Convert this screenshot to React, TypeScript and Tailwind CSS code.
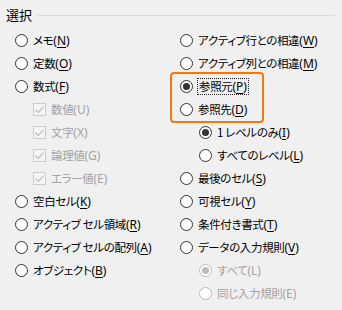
import React from 'react';

type Item = {
  label: string;
  key: string;
  kind?: 'radio' | 'check';
  checked?: boolean;
  disabled?: boolean;
  indent?: boolean;
  focus?: boolean;
};

const left: Item[] = [
  { label: 'メモ', key: 'N' },
  { label: '定数', key: 'O' },
  { label: '数式', key: 'F' },
  { label: '数値', key: 'U', kind: 'check', checked: true, disabled: true, indent: true },
  { label: '文字', key: 'X', kind: 'check', checked: true, disabled: true, indent: true },
  { label: '論理値', key: 'G', kind: 'check', checked: true, disabled: true, indent: true },
  { label: 'エラー値', key: 'E', kind: 'check', checked: true, disabled: true, indent: true },
  { label: '空白セル', key: 'K' },
  { label: 'アクティブ セル領域', key: 'R' },
  { label: 'アクティブ セルの配列', key: 'A' },
  { label: 'オブジェクト', key: 'B' },
];

const right: Item[] = [
  { label: 'アクティブ行との相違', key: 'W' },
  { label: 'アクティブ列との相違', key: 'M' },
  { label: '参照元', key: 'P', checked: true, focus: true },
  { label: '参照先', key: 'D' },
  { label: '1 レベルのみ', key: 'I', checked: true, indent: true },
  { label: 'すべてのレベル', key: 'L', indent: true },
  { label: '最後のセル', key: 'S' },
  { label: '可視セル', key: 'Y' },
  { label: '条件付き書式', key: 'T' },
  { label: 'データの入力規則', key: 'V' },
  { label: 'すべて', key: 'L', checked: true, disabled: true, indent: true },
  { label: '同じ入力規則', key: 'E', disabled: true, indent: true },
];

function Radio({ checked, disabled }: { checked?: boolean; disabled?: boolean }) {
  return (
    <span
      className={`flex h-[13px] w-[13px] shrink-0 items-center justify-center rounded-full border bg-white ${
        disabled ? 'border-[#bcbcbc] bg-[#f5f5f5]' : 'border-[#333333]'
      }`}
    >
      {checked && (
        <span className={`h-[7px] w-[7px] rounded-full ${disabled ? 'bg-[#bcbcbc]' : 'bg-[#333333]'}`} />
      )}
    </span>
  );
}

function Check() {
  return (
    <span className="flex h-[13px] w-[13px] shrink-0 items-center justify-center border border-[#cccccc] bg-[#f5f5f5]">
      <svg width="11" height="11" viewBox="0 0 11 11">
        <path d="M1.5 5.8 L4.2 8.4 L9.5 2.8" fill="none" stroke="#bdbdbd" strokeWidth="1.2" />
      </svg>
    </span>
  );
}

function Row({ item, indentPx }: { item: Item; indentPx: string }) {
  const label = (
    <span className={item.disabled ? 'text-[#a3a3a3]' : 'text-[#000000]'}>
      {item.label}
      <span className="font-['Noto_Sans',sans-serif] text-[12px] tracking-normal">
        (<span className={item.disabled ? '' : 'underline underline-offset-2'}>{item.key}</span>)
      </span>
    </span>
  );
  return (
    <div className={`flex h-[23px] items-center gap-[5px] ${item.indent ? indentPx : ''}`}>
      {item.kind === 'check' ? <Check /> : <Radio checked={item.checked} disabled={item.disabled} />}
      {item.focus ? (
        <span className="-my-px -ml-px border border-dotted border-[#222] px-px leading-[14px]">{label}</span>
      ) : (
        label
      )}
    </div>
  );
}

export default function App() {
  return (
    <div
      className="relative h-[310px] w-[342px] overflow-hidden bg-[#f0f0f0] text-[11.5px] tracking-[-0.35px] [font-feature-settings:'palt']"
      style={{ fontFamily: '"Noto Sans CJK JP", "Noto Sans", sans-serif' }}
    >
      <div className="flex items-center pt-[6px] pl-[6px] pr-[7px]">
        <span className="text-[13px] leading-[18px] tracking-normal text-black">選択</span>
        <span className="ml-[5px] h-px flex-1 bg-[#dcdcdc]" />
      </div>
      <div className="flex pt-[5px]">
        <div className="w-[180px] pl-[15px]">
          {left.map((item, i) => (
            <Row key={i} item={item} indentPx="pl-[18px]" />
          ))}
        </div>
        <div className="relative flex-1">
          <div className="pointer-events-none absolute top-[43px] left-[-10px] h-[51px] w-[94px] rounded-[4px] border-2 border-[#f7780a]" />
          {right.map((item, i) => (
            <Row key={i} item={item} indentPx="pl-[19px]" />
          ))}
        </div>
      </div>
    </div>
  );
}
